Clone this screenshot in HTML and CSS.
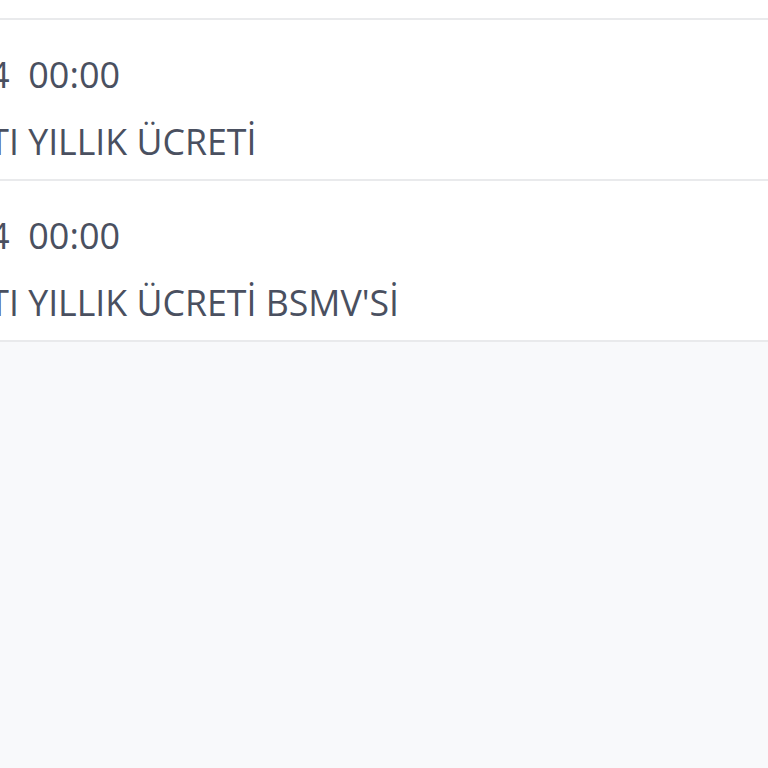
FILE: index.html
```html
<!DOCTYPE html>
<html lang="tr">
<head>
<meta charset="utf-8">
<link rel="stylesheet" href="styles.css">
</head>
<body>
<div class="list">
  <div class="row row-prev"></div>
  <div class="row">
    <div class="content">
      <div class="line date">01.01.2024&nbsp;&nbsp;00:00</div>
      <div class="line desc">KREDİ KARTI YILLIK ÜCRETİ</div>
    </div>
  </div>
  <div class="row">
    <div class="content">
      <div class="line date">01.01.2024&nbsp;&nbsp;00:00</div>
      <div class="line desc">KREDİ KARTI YILLIK ÜCRETİ BSMV'Sİ</div>
    </div>
  </div>
</div>
</body>
</html>
```
FILE: styles.css
```css
html, body {
  margin: 0;
  padding: 0;
  width: 768px;
  height: 768px;
  overflow: hidden;
  background: #f8f9fb;
}
body {
  font-family: "Open Sans", "Noto Sans", sans-serif;
  color: #4a5060;
}
.list {
  display: flex;
  flex-direction: column;
}
.row {
  background: #ffffff;
  border-bottom: 2px solid #e9eaec;
  height: 159px;
  box-sizing: content-box;
}
.row-prev {
  height: 18px;
}
.content {
  display: flex;
  flex-direction: column;
  gap: 18px;
  padding-top: 30px;
  margin-left: -174px;
}
.line {
  white-space: nowrap;
  font-size: 36px;
  line-height: 49px;
}
.desc {
  margin-left: -12px;
  font-size: 35.7px;
}
```
